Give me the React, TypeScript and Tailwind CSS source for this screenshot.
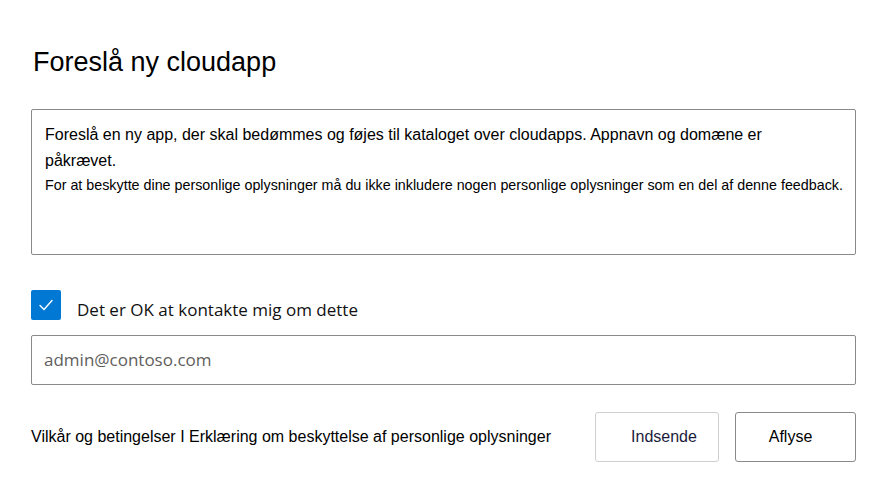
export default function App() {
  return (
    <div className="h-[491px] w-[885px] bg-white text-black" style={{ fontFamily: '"Liberation Sans", Arial, sans-serif' }}>
      <div className="flex flex-col pl-[31px] pr-[29px] pt-[44px]">
        <h1 className="pl-[2px] text-[27px] leading-[36px] font-normal">Foreslå ny cloudapp</h1>

        {/* Description box */}
        <div className="mt-[29px] h-[146px] rounded-[2px] border border-[#8a8a8a] pl-[13px] pr-[8px] pt-[12px]">
          <p className="w-[740px] text-[16px] leading-[26px]">
            Foreslå en ny app, der skal bedømmes og føjes til kataloget over cloudapps. Appnavn og domæne er påkrævet.
          </p>
          <p className="text-[14.3px] leading-[22px]">
            For at beskytte dine personlige oplysninger må du ikke inkludere nogen personlige oplysninger som en del af denne feedback.
          </p>
        </div>

        {/* Contact checkbox */}
        <label className="mt-[35px] flex h-[30px] items-start gap-[16px]">
          <span className="flex h-[30px] w-[30px] items-center justify-center rounded-[2px] bg-[#0078d4]">
            <svg width="18" height="18" viewBox="0 0 18 18" fill="none">
              <path d="M3 9.5l4 4 8-9" stroke="white" strokeWidth="1.4" strokeLinecap="round" strokeLinejoin="round" />
            </svg>
          </span>
          <span className="mt-[9px] text-[17px] leading-[22px] text-[#111]" style={{ fontFamily: '"Open Sans", "Noto Sans", sans-serif' }}>
            Det er OK at kontakte mig om dette
          </span>
        </label>

        {/* Email input */}
        <div className="mt-[15px] flex h-[50px] items-center rounded-[2px] border border-[#8a8a8a] px-[12px]">
          <span className="text-[17px] text-[#605e5c]" style={{ fontFamily: '"Open Sans", "Noto Sans", sans-serif' }}>
            admin@contoso.com
          </span>
        </div>

        {/* Footer */}
        <div className="mt-[27px] flex items-center">
          <p className="flex-1 text-[16px]">
            Vilkår og betingelser I Erklæring om beskyttelse af personlige oplysninger
          </p>
          <button className="h-[50px] w-[124px] rounded-[3px] border border-[#cfcfcf] bg-white pl-[14px] text-[16px] text-[#1b1b3a]">
            Indsende
          </button>
          <button className="ml-[16px] h-[50px] w-[121px] rounded-[3px] border border-[#8a8a8a] bg-white pr-[10px] text-[16px]">
            Aflyse
          </button>
        </div>
      </div>
    </div>
  );
}
